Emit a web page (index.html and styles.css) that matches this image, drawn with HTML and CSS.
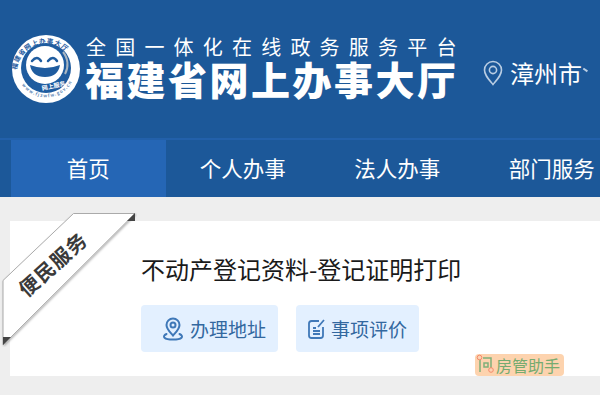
FILE: index.html
```html
<!DOCTYPE html>
<html lang="zh-CN">
<head>
    <meta charset="UTF-8">
    <meta name="viewport" content="width=device-width, initial-scale=1.0">
    <title>福建省网上办事大厅</title>
    <link rel="stylesheet" href="styles.css">
</head>

<body>
    <header class="top-header">
        <svg class="logo" width="70" height="70" viewBox="0 0 70 70">
            <defs>
                <path id="logo-top" d="M5.500 39a29.500 29.500 0 0 1 59 0"></path>
                <path id="logo-bottom" d="M7 44a30 30 0 0 0 56 0"></path>
            </defs>
            <circle cx="35" cy="35" r="34" fill="#fff"></circle>
            <circle cx="35" cy="34" r="25" fill="#1f5c9f"></circle>
            <path d="M52 18a19.500 19.500 0 0 1 2 22" fill="none" stroke="#a9b6c2" stroke-width="2"></path>
            <circle cx="34" cy="31" r="19" fill="#fff"></circle>
            <path d="M21 27q5-6 9 0M37 27q5-6 9 0" fill="none" stroke="#1f5c9f" stroke-width="2.500" stroke-linecap="round"></path>
            <path d="M19 31q15 6 30 0q-2 12-15 12t-15-12z" fill="#1f5c9f"></path>
            <text class="logo-ring" font-size="6.500" letter-spacing="0.800"><textPath href="#logo-top" startOffset="3">福建省网上办事大厅</textPath></text>
            <text class="logo-ring logo-url" font-size="4.500" letter-spacing="1"><textPath href="#logo-bottom" startOffset="8">www.fjzwfw.gov.cn</textPath></text>
            <text class="logo-small" transform="translate(43 54) rotate(-12)" text-anchor="middle">网上服务</text>
        </svg>
        <div class="brand">
            <div class="brand-sub">全国一体化在线政务服务平台</div>
            <div class="brand-main">福建省网上办事大厅</div>
        </div>
        <div class="city">
            <svg width="20" height="26" viewBox="0 0 20 26">
                <path d="M10 24.500C5 18.500 1.500 15 1.500 10a8.500 8.500 0 0 1 17 0c0 5-3.500 8.500-8.500 14.500z" fill="none" stroke="#b9cde3" stroke-width="1.600"></path>
                <circle cx="10" cy="10" r="3.600" fill="none" stroke="#b9cde3" stroke-width="1.600"></circle>
            </svg>
            <span>漳州市</span>
            <span class="city-arrow"></span>
        </div>
    </header>

    <nav class="main-nav">
        <a class="nav-item active">首页</a>
        <a class="nav-item">个人办事</a>
        <a class="nav-item">法人办事</a>
        <a class="nav-item">部门服务</a>
    </nav>

    <main class="content">
        <section class="card">
            <h2>不动产登记资料-登记证明打印</h2>
            <div class="actions">
                <a class="action-btn btn-address">
                    <svg width="22" height="24" viewBox="0 0 22 24">
                        <path d="M11 18.500C7.500 14.500 4.500 12 4.500 8a6.500 6.500 0 0 1 13 0c0 4-3 6.500-6.500 10.500z" fill="none" stroke="#3f78b8" stroke-width="2"></path>
                        <circle cx="11" cy="8" r="2.500" fill="none" stroke="#3f78b8" stroke-width="2"></circle>
                        <path d="M4.500 17c-5 2.500-2.500 5.500 6.500 5.500s11.500-3 6.500-5.500" fill="none" stroke="#3f78b8" stroke-width="2" stroke-linecap="round"></path>
                    </svg>
                    <span>办理地址</span>
                </a>
                <a class="action-btn btn-rate">
                    <svg width="18" height="20" viewBox="0 0 18 20">
                        <path d="M11 2H3.500Q1 2 1 4.500v12Q1 19 3.500 19h9q2.500 0 2.500-2.500V8" fill="none" stroke="#3f78b8" stroke-width="1.800"></path>
                        <path d="M10 8l6-7M5 9h3M5 12h7M5 15h7" fill="none" stroke="#3f78b8" stroke-width="1.800"></path>
                    </svg>
                    <span>事项评价</span>
                </a>
            </div>

            <svg class="ribbon" width="136" height="134" viewBox="0 0 136 134">
                <defs>
                    <filter id="ribbon-shadow" x="-10%" y="-10%" width="120%" height="120%">
                        <feDropShadow dx="1" dy="1" stdDeviation="1" flood-color="#000" flood-opacity="0.3"></feDropShadow>
                    </filter>
                </defs>
                <path d="M72.500 .5H134L2 132V67.500z" fill="#fff" stroke="#aaa" stroke-width="1" filter="url(#ribbon-shadow)"></path>
                <path d="M134 0l-8 8h8zM2 132l8-8H2z" fill="#444"></path>
                <text class="ribbon-text" transform="translate(57 57) rotate(-42)" text-anchor="middle">便民服务</text>
            </svg>
        </section>
        <div class="float-tag">
            <svg width="20" height="22" viewBox="0 0 20 22">
                <path d="M4 5v13M7 4h8v13M8 9h4v4H8z" fill="none" stroke="#7fb07a" stroke-width="1.500"></path>
                <circle cx="3.500" cy="3.500" r="2.300" fill="#fbd3b4" stroke="#f58a6a"></circle>
                <circle cx="15" cy="16" r="2.300" fill="#fbd3b4" stroke="#f58a6a"></circle>
            </svg>
            <span>房管助手</span>
        </div>
    </main>
    <div class="page-rest"></div>
</body>
</html>
```

FILE: styles.css
```css
html, body {
    margin: 0;
    padding: 0;
    height: 400px;
    overflow: hidden;
    background: #fff;
}
body {
    font-family: "Noto Sans CJK SC", "Liberation Sans", sans-serif;
    color: #222;
}
.top-header {
    height: 138px;
    background: #1c5899;
    display: flex;
    align-items: flex-start;
    box-sizing: border-box;
    padding: 36px 0 0 11px;
    white-space: nowrap;
    overflow: hidden;
}
.logo {
    flex: none;
    margin-top: -2px;
    overflow: visible;
}
.logo-ring {
    fill: #1f5c9f;
    font-weight: 700;
}
.logo-url {
    fill: #5f88b5;
}
.logo-small {
    fill: #fff;
    font-size: 6px;
    font-weight: 700;
}
.brand {
    margin-left: 4px;
    width: 380px;
    flex: none;
    color: #fff;
}
.brand-sub {
    font-size: 20px;
    line-height: 22px;
    letter-spacing: 9.200px;
    margin-left: 1px;
}
.brand-main {
    font-size: 39px;
    line-height: 40px;
    font-weight: 900;
    letter-spacing: 2.500px;
}
.city {
    display: flex;
    align-items: center;
    margin: 23px 0 0 18px;
    color: #fff;
    font-size: 24px;
    line-height: 28px;
}
.city svg {
    margin-right: 7px;
}
.city-arrow {
    width: 5px;
    height: 1.500px;
    background: #b9cde3;
    transform: rotate(35deg);
    margin: -6px 0 0 1px;
}
.main-nav {
    height: 59px;
    box-sizing: border-box;
    border-top: 2px solid #2260aa;
    background: #1c5899;
    display: flex;
    padding-left: 11px;
    white-space: nowrap;
    overflow: hidden;
}
.nav-item {
    flex: none;
    width: 154.500px;
    text-align: center;
    color: #fff;
    font-size: 21.500px;
    line-height: 56px;
}
.nav-item.active {
    background: #2566b5;
}
.content {
    position: relative;
    background: #eee;
    padding: 24px 0 19px 10px;
}
.card {
    position: relative;
    height: 155px;
    box-sizing: border-box;
    background: #fff;
    padding: 32px 0 0 131px;
}
.card h2 {
    margin: 0;
    font-size: 24px;
    line-height: 32px;
    font-weight: 400;
    color: #1a1a1a;
    white-space: nowrap;
}
.actions {
    display: flex;
    gap: 18px;
    margin-top: 20px;
}
.action-btn {
    display: flex;
    align-items: center;
    height: 47px;
    box-sizing: border-box;
    background: #e3f0ff;
    border-radius: 4px;
    color: #33689f;
    font-size: 19px;
}
.btn-address {
    width: 137px;
    padding-left: 21px;
}
.btn-address svg {
    margin-right: 6px;
}
.btn-rate {
    width: 123px;
    padding-left: 12px;
}
.btn-rate svg {
    margin-right: 5px;
}
.ribbon {
    position: absolute;
    left: -9px;
    top: -8px;
}
.ribbon-text {
    font-size: 20px;
    font-weight: 700;
    fill: #3a3a3a;
    letter-spacing: 1px;
}
.float-tag {
    position: absolute;
    left: 475px;
    top: 157px;
    width: 89px;
    height: 22px;
    box-sizing: border-box;
    display: flex;
    align-items: center;
    background: #fdd3ae;
    border-radius: 4px;
    color: #76ab70;
    font-size: 16px;
    padding-left: 1px;
}
.float-tag svg {
    flex: none;
}
.page-rest {
    height: 5px;
    background: #fff;
}
```
